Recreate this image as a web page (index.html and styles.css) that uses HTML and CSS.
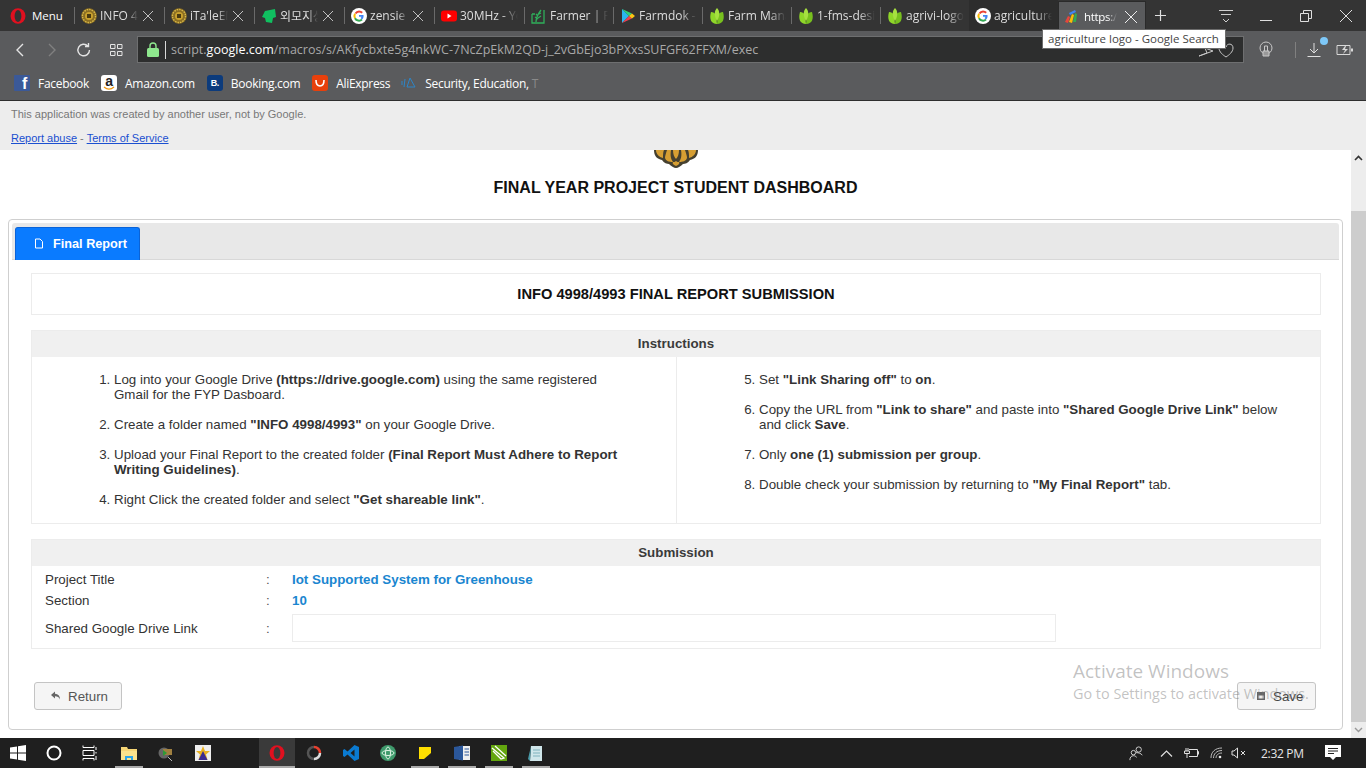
FILE: index.html
```html
<!DOCTYPE html>
<html lang="en">
<head>
<meta charset="utf-8">
<title>Final Report</title>
<link rel="stylesheet" href="styles.css">
</head>
<body>
<header class="browser">
  <div class="tabbar">
    <div class="menu">
      <svg class="ico16" viewBox="0 0 16 16"><ellipse cx="8" cy="8" rx="7.500" ry="7.700" fill="#e0101f"/><ellipse cx="8" cy="8" rx="3.400" ry="6" fill="#333"/></svg>
      <span>Menu</span>
    </div>
    <div class="tab"><svg class="ico16" viewBox="0 0 16 16"><use href="#crest"/></svg><span class="t">INFO 4</span><span class="x"></span></div>
    <div class="tab"><svg class="ico16" viewBox="0 0 16 16"><use href="#crest"/></svg><span class="t">iTa'leEM</span><span class="x"></span></div>
    <div class="tab"><svg class="ico16" viewBox="0 0 16 16"><path d="M4 3l10-2 1 8-3 1-1 5-6-1-1-4-3-1z" fill="#10c060"/></svg><span class="t">외모지상</span><span class="x"></span></div>
    <div class="tab"><svg class="ico16" viewBox="0 0 16 16"><use href="#g"/></svg><span class="t">zensie</span><span class="x"></span></div>
    <div class="tab"><svg class="ico16" viewBox="0 0 16 16"><rect y="2.500" width="16" height="11" rx="3" fill="#f00"/><path d="M6.500 5.500l4 2.500-4 2.500z" fill="#fff"/></svg><span class="t">30MHz - Yo</span></div>
    <div class="tab"><svg class="ico16" viewBox="0 0 16 16" fill="none" stroke="#2fae5a" stroke-width="1.300"><path d="M1 6h3M1 6v9h9M13 2v13h-3M5 14c0-5 2-8 5-12M5 6l2 2M4 9l3 2M10 5l-2 1M10 8l-3 2"/></svg><span class="t">Farmer | FA</span></div>
    <div class="tab"><svg class="ico16" viewBox="0 0 16 16"><path d="M2 1v14l7-7z" fill="#2ab7f0"/><path d="M2 1l7 7 3-2.500z" fill="#2fd07a"/><path d="M2 15l7-7 3 2.500z" fill="#ef4050"/><path d="M12 5.500l3 2.500-3 2.500L9 8z" fill="#fcc513"/></svg><span class="t">Farmdok -</span></div>
    <div class="tab"><svg class="ico16" viewBox="0 0 16 16"><use href="#leaf"/></svg><span class="t">Farm Mana</span></div>
    <div class="tab"><svg class="ico16" viewBox="0 0 16 16"><use href="#leaf"/></svg><span class="t">1-fms-desi</span></div>
    <div class="tab"><svg class="ico16" viewBox="0 0 16 16"><use href="#leaf"/></svg><span class="t">agrivi-logo</span></div>
    <div class="tab plain"><svg class="ico16" viewBox="0 0 16 16"><use href="#g"/></svg><span class="t">agriculture</span></div>
    <div class="tab active"><svg class="ico16" viewBox="0 0 16 16"><path d="M1 13l3-6 2 1-2 6z" fill="#e8453c"/><path d="M5 13l3-8 2 1-2 8z" fill="#fbbc05"/><path d="M9 13l2-9 2 1-1 8z" fill="#34a853"/><path d="M5 4l6-3 1 2-6 3z" fill="#4285f4"/></svg><span class="t">https:/</span><span class="x"></span></div>
    <svg class="plus" viewBox="0 0 13 13"><path d="M6.500 1v11M1 6.500h11" stroke="#e0e0e0" fill="none" stroke-width="1.200"/></svg>
    <div class="winbtns">
      <svg class="wb" viewBox="0 0 16 16" fill="none" stroke="#d0d0d0"><path d="M1 2.500h14M3 6.500h10M5 11l3 3 3-3"/></svg>
      <svg class="wb" viewBox="0 0 16 16" fill="none" stroke="#e0e0e0"><path d="M2 12.500h12"/></svg>
      <svg class="wb" viewBox="0 0 16 16" fill="none" stroke="#e0e0e0"><path d="M2.500 5.500h8v8h-8zM5.500 5.500v-3h8v8h-3"/></svg>
      <svg class="wb" viewBox="0 0 16 16" fill="none" stroke="#e0e0e0"><path d="M2 2l12 12M14 2L2 14"/></svg>
    </div>
  </div>
  <div class="addr">
    <svg class="nav" viewBox="0 0 16 16" fill="none" stroke="#e4e4e4" stroke-width="1.400"><path d="M11 2L5 8l6 6"/></svg>
    <svg class="nav" viewBox="0 0 16 16" fill="none" stroke="#808080" stroke-width="1.400"><path d="M5 2l6 6-6 6"/></svg>
    <svg class="nav" viewBox="0 0 16 16" fill="none" stroke="#e4e4e4" stroke-width="1.400"><path d="M13.500 8a5.800 5.800 0 1 1-1.700-4.100M12.500 1v3.500H9"/></svg>
    <svg class="nav" viewBox="0 0 16 16" fill="none" stroke="#e4e4e4"><path d="M2.500 2.500h4.500v4H2.500zM9.500 2.500H14v4H9.500zM2.500 9.500h4.500v4H2.500zM9.500 9.500H14v4H9.500z"/></svg>
    <div class="urlbox">
      <svg class="lock" viewBox="0 0 12 15"><path d="M3 7V4a3 3 0 0 1 6 0v3" fill="none" stroke="#8ee88e" stroke-width="1.400"/><rect y="6" width="12" height="9" rx="1.500" fill="#8ee88e"/></svg>
      <span class="url"><span class="dim">script.</span>google.com<span class="dim">/macros/s/AKfycbxte5g4nkWC-7NcZpEkM2QD-j_2vGbEjo3bPXxsSUFGF62FFXM/exec</span></span>
      <svg class="urlico" viewBox="0 0 36 16" fill="none" stroke="#c8c8c8"><path d="M1 14l14-5-8-3 2 5zM21 6c0-5 6-5 7-1 1-4 7-4 7 1 0 4-4 7-7 9-3-2-7-5-7-9z"/></svg>
    </div>
    <div class="extras">
      <svg class="ex1" viewBox="0 0 16 18" fill="none" stroke="#c8c8c8"><circle cx="8" cy="7" r="6"/><path d="M5 10h6v5H5z" fill="#999"/><path d="M6.500 10V5h3v5"/></svg>
      <span class="vsep"></span>
      <span class="dl"><svg viewBox="0 0 16 16" fill="none" stroke="#e0e0e0"><path d="M8 1v10M4 7l4 4 4-4M1.500 14.500h13"/></svg><i class="dot"></i></span>
      <svg class="bat" viewBox="0 0 18 12" fill="none" stroke="#d8d8d8"><path d="M1 1.500h13v9H1z"/><path d="M16 4.500v3" stroke-width="2"/><path d="M9 2L6 6h3l-2 4 5-5H9l1-3z" fill="#d8d8d8" stroke="none"/></svg>
    </div>
  </div>
  <div class="bookmarks">
    <div class="bm"><span class="bi fb">f</span>Facebook</div>
    <div class="bm"><span class="bi az"><span class="aza">a</span><svg class="smile" viewBox="0 0 16 5"><path d="M3 1c3 2.500 7 2.500 10 0" fill="none" stroke="#f0960e" stroke-width="1.300"/></svg></span>Amazon.com</div>
    <div class="bm"><span class="bi bk">B.</span>Booking.com</div>
    <div class="bm"><span class="bi ali"><svg viewBox="0 0 16 16"><path d="M4 5c0 8 8 8 8 0" fill="none" stroke="#fff" stroke-width="1.600"/></svg></span>AliExpress</div>
    <div class="bm last"><svg class="bi" viewBox="0 0 16 16" fill="none" stroke="#2d86c8"><path d="M1 6v4M4 4l-1 8M9 3l5 9H6z"/></svg><span>Security, Education, <span class="fade">T</span></span></div>
  </div>
</header>

<div class="gasbar">
  <p class="gasnote">This application was created by another user, not by Google.</p>
  <p class="gaslinks"><a href="#">Report abuse</a> - <a href="#">Terms of Service</a></p>
</div>

<div class="viewport">
  <main class="page">
    <div class="logoclip"><svg class="logo" viewBox="0 0 46 18"><path d="M1 0c0 6 3 9 8 10 2 3 5 4 7 4 2 2 5 4 7 4s5-2 7-4c2 0 5-1 7-4 5-1 8-4 8-10z" fill="#45402f"/><path d="M3 0c0 4 3 7 7 8 0-3 0-6 1-8zM12 8c1 3 4 4 8 4-2-3-3-6-2-12h-4c-1 3-2 6-2 8zM34 8c-1 3-4 4-8 4 2-3 3-6 2-12h4c1 3 2 6 2 8zM43 0c0 4-3 7-7 8 0-3 0-6-1-8zM23 16c-3-1-4-3-3-4 1 0 2 0 3-1 1 1 2 1 3 1 1 1 0 3-3 4zM20 0c0 4 1 7 3 9 2-2 3-5 3-9z" fill="#d69e32"/></svg></div>
    <h1 class="apptitle">FINAL YEAR PROJECT STUDENT DASHBOARD</h1>
    <section class="card">
      <nav class="tabstrip">
        <div class="ftab"><svg viewBox="0 0 10 11" fill="none" stroke="#fff"><path d="M1.500 1h4.500l2.500 2.500v6.500h-7z"/></svg><span>Final Report</span></div>
      </nav>
      <div class="content">
        <div class="panel headline">INFO 4998/4993 FINAL REPORT SUBMISSION</div>
        <div class="panel">
          <div class="phead">Instructions</div>
          <div class="cols">
            <ol class="steps">
              <li>Log into your Google Drive <b>(https://drive.google.com)</b> using the same registered Gmail for the FYP Dasboard.</li>
              <li>Create a folder named <b>"INFO 4998/4993"</b> on your Google Drive.</li>
              <li>Upload your Final Report to the created folder <b>(Final Report Must Adhere to Report Writing Guidelines)</b>.</li>
              <li>Right Click the created folder and select <b>"Get shareable link"</b>.</li>
            </ol>
            <ol class="steps right" start="5">
              <li>Set <b>"Link Sharing off"</b> to <b>on</b>.</li>
              <li>Copy the URL from <b>"Link to share"</b> and paste into <b>"Shared Google Drive Link"</b> below and click <b>Save</b>.</li>
              <li>Only <b>one (1) submission per group</b>.</li>
              <li>Double check your submission by returning to <b>"My Final Report"</b> tab.</li>
            </ol>
          </div>
        </div>
        <div class="panel">
          <div class="phead">Submission</div>
          <div class="form">
            <div class="row r1"><span class="lab">Project Title</span><span class="col">:</span><span class="val">Iot Supported System for Greenhouse</span></div>
            <div class="row r2"><span class="lab">Section</span><span class="col">:</span><span class="val">10</span></div>
            <div class="row r3"><span class="lab">Shared Google Drive Link</span><span class="col">:</span><span class="inp"></span></div>
          </div>
        </div>
        <div class="actions">
          <div class="btn ret"><svg viewBox="0 0 10 9" fill="#666"><path d="M4 0L0 3.500 4 7V4.800c2.500 0 4 .7 5 3.200 0-3.500-2-5.500-5-5.700z"/></svg>Return</div>
          <div class="btn save"><svg viewBox="0 0 10 10" fill="#666"><path d="M1 1h8v8H1z"/><path d="M2.500 4.500h5v3h-5z" fill="#eee"/></svg>Save</div>
        </div>
      </div>
    </section>
  </main>
  <aside class="scrollbar">
    <svg viewBox="0 0 9 6" fill="none" stroke="#333" stroke-width="1.600"><path d="M1 5l3.500-3.500L8 5"/></svg>
    <div class="track"><div class="thumb"></div></div>
    <svg viewBox="0 0 9 6" fill="none" stroke="#999" stroke-width="1.400"><path d="M1 1l3.500 3.500L8 1"/></svg>
  </aside>
</div>

<footer class="taskbar">
  <svg class="ti" viewBox="0 0 16 16" fill="#fff"><path d="M0 2.500l7-1v6H0zM8 1.300L16 0v7.500H8zM0 8.500h7v6l-7-1zM8 8.500h8V16l-8-1.200z"/></svg>
  <svg class="ti sys" viewBox="0 0 16 16" fill="none" stroke="#fff" stroke-width="2"><circle cx="8" cy="8" r="6.500"/></svg>
  <svg class="ti sys" viewBox="0 0 16 16" fill="none" stroke="#fff"><path d="M1 .5v2h11v-2M1 15.500v-2h11v2M1 5.500h11v5H1zM14 2v3M14 7v1.500M14 11v4"/></svg>
  <span class="ti on folder"><svg viewBox="0 0 16 16"><path d="M0 2h6l1 2h9v11H0z" fill="#f6d676"/><path d="M0 6h16v9H0z" fill="#fbe38c"/><path d="M4 11h8v4h-2v-2H6v2H4z" fill="#2ba5e8"/></svg></span>
  <span class="ti"><svg viewBox="0 0 16 16"><circle cx="6" cy="8" r="5.500" fill="#666"/><path d="M5 4h9v6H5z" fill="#a08040"/><path d="M5 5v6l4-3z" fill="#2c9a38"/><path d="M10 12l4 4" stroke="#bbb"/></svg></span>
  <span class="ti"><svg viewBox="0 0 16 16"><rect width="16" height="16" fill="#eee"/><path d="M8 1l2 5h5l-4 3.500 1.500 5.500L8 12l-4.500 3L5 9.500 1 6h5z" fill="#e8b020"/><path d="M8 6l4.500 9H3.500z" fill="#3b2a90"/></svg></span>
  <span class="ti active"><svg viewBox="0 0 16 16"><ellipse cx="8" cy="8" rx="7.500" ry="7.800" fill="#e0101f"/><ellipse cx="8" cy="8" rx="3.400" ry="6" fill="#3a3a3a"/></svg></span>
  <span class="ti"><svg viewBox="0 0 16 16" fill="none" stroke-width="2.500"><path d="M8 2a6 6 0 0 1 6 6" stroke="#e8402f"/><path d="M14 8a6 6 0 0 1-6 6" stroke="#ddd"/><path d="M8 14a6 6 0 0 1-6-6 6 6 0 0 1 6-6" stroke="#555"/></svg></span>
  <span class="ti"><svg viewBox="0 0 16 16"><path d="M11.500 0L16 2v12l-4.500 2L4.500 9.500 1.500 12 0 11V5l1.500-1 3 2.500zM11.500 4.500L7.500 8l4 3.500z" fill="#0a7ad1"/></svg></span>
  <span class="ti"><svg viewBox="0 0 16 16"><circle cx="8" cy="8" r="8" fill="#3f9a6c"/><g fill="none" stroke="#dff3e4"><ellipse cx="8" cy="8" rx="6" ry="2.500"/><ellipse cx="8" cy="8" rx="2.500" ry="6"/></g></svg></span>
  <span class="ti on"><svg viewBox="0 0 16 16"><path d="M2 2h12v12H2z" fill="#ffdf00"/><path d="M7 14l7-6v6z" fill="#222"/></svg></span>
  <span class="ti on"><svg viewBox="0 0 16 16"><path d="M5 1h11v14H5z" fill="#eee"/><path d="M0 2l9-1.500v15L0 14z" fill="#2b579a"/><path d="M10.500 4H15M10.500 7H15M10.500 10H15" stroke="#2b579a"/></svg></span>
  <span class="ti on"><svg viewBox="0 0 16 16"><rect width="16" height="16" fill="#63a60f"/><path d="M1 3l12 10-3 1L2 6M4 1l11 10" fill="none" stroke="#fff" stroke-width="1.300"/></svg></span>
  <span class="ti on"><svg viewBox="0 0 16 16"><path d="M3 1h11v15H2z" fill="#cfe6ea"/><path d="M3 1L0 14l2 2z" fill="#4a9aa8"/><path d="M5 5h7M5 8h7M5 11h7" stroke="#7fb2bd"/></svg></span>
  <div class="tray">
    <svg class="ppl" viewBox="0 0 17 17" fill="none" stroke="#e0e0e0"><circle cx="11" cy="4" r="3"/><circle cx="5" cy="7.500" r="2.500"/><path d="M1 16c0-3 1.500-5 4-5s3 1 3.500 2M8 7.500c3 0 6 1 7 3"/></svg>
    <svg class="chev" viewBox="0 0 13 7" fill="none" stroke="#e0e0e0" stroke-width="1.200"><path d="M1 6.500l5.500-5.500L12 6.500"/></svg>
    <svg class="plug" viewBox="0 0 16 10" fill="none" stroke="#e0e0e0"><path d="M6 1.500h8.500v7H6M14.500 3.500h1v3M3 0v3M5 0v3M1.500 3h5v2.500h-5zM4 5.500V10"/></svg>
    <svg class="wifi" viewBox="0 0 13 12" fill="none" stroke="#bbb"><path d="M1 11C1 5 5 1 12 1M3.500 11c0-4 3-7.500 8.500-7.500M6 11c0-2.500 2-5 6-5"/><circle cx="10" cy="10" r="1.300" fill="#eee" stroke="none"/></svg>
    <svg class="vol" viewBox="0 0 15 12" fill="none" stroke="#e0e0e0"><path d="M1 4v4h2l3.500 3V1L3 4zM10 4l4 4M14 4l-4 4"/></svg>
    <span class="clock">2:32 PM</span>
    <svg class="note" viewBox="0 0 16 16" fill="#fff"><path d="M0 0h16v12h-5l-3 3-3-3H0z"/><path d="M3 3.500h10M3 6h10M3 8.500h6" stroke="#222"/></svg>
  </div>
</footer>

<div class="tooltip">agriculture logo - Google Search</div>
<div class="watermark"><div class="wm1">Activate Windows</div><div class="wm2">Go to Settings to activate Windows.</div></div>

<svg class="defs" width="0" height="0"><defs>
  <g id="crest"><circle cx="8" cy="8" r="7.800" fill="#8a6d22"/><circle cx="8" cy="8" r="6.500" fill="none" stroke="#d8b84a" stroke-width="1.400" stroke-dasharray="1.500 1"/><circle cx="8" cy="8" r="4" fill="#c9a12e"/><rect x="6" y="6" width="4" height="4" fill="#4a3a10"/></g>
  <g id="g"><circle cx="8" cy="8" r="8" fill="#fff"/><path d="M8 3.500a4.500 4.500 0 0 1 3.200 1.300" fill="none" stroke="#ea4335" stroke-width="2"/><path d="M4.500 5.500A4.500 4.500 0 0 1 8 3.500" fill="none" stroke="#ea4335" stroke-width="2"/><path d="M4 10.200a4.500 4.500 0 0 1 0-4.400" fill="none" stroke="#fbbc05" stroke-width="2"/><path d="M11 11.500A4.500 4.500 0 0 1 4 10.200" fill="none" stroke="#34a853" stroke-width="2"/><path d="M8 7h4.500c.3 2-.3 3.500-1.500 4.500L9.500 10c.5-.3.800-.8 1-1.300H8z" fill="#4285f4"/></g>
  <g id="leaf"><path d="M8 16C2 16 0 11 2 4c2 0 4 1 5 3z" fill="#8fd629"/><path d="M8 16c6 0 8-5 6-12-2 0-4 1-5 3z" fill="#78c01e"/><path d="M8 0C5 3 5 8 8 13c3-5 3-10 0-13z" fill="#a6e040"/></g>
</defs></svg>
</body>
</html>
```
FILE: styles.css
```css
* { box-sizing: border-box; }
html, body { margin: 0; padding: 0; }
body {
  width: 1366px;
  height: 768px;
  overflow: hidden;
  position: relative;
  display: flex;
  flex-direction: column;
  font-family: "Liberation Sans", Arial, sans-serif;
  background: #fff;
  color: #333;
}
.defs { position: absolute; }
.browser { background: #5a5b5d; height: 100px; flex: none; }

.tabbar { height: 31px; background: #343434; display: flex; align-items: stretch; font-family: "Open Sans", sans-serif; font-size: 12px; color: #dcdcdc; }
.ico16 { width: 16px; height: 16px; flex: none; }
.menu { width: 74px; flex: none; padding-left: 10px; display: flex; align-items: center; gap: 6px; color: #fff; font-size: 11.500px; }
.tab { width: 89px; flex: none; display: flex; align-items: center; padding-left: 7px; position: relative; }
.tab:nth-child(-n+6) { width: 90px; }
.tab::before { content: ""; position: absolute; left: 0; top: 7px; bottom: 7px; width: 1px; background: #6a6a6a; }
.tab .t { margin-left: 3px; width: 38px; flex: none; overflow: hidden; white-space: nowrap; font-size: 12px; -webkit-mask-image: linear-gradient(90deg, #000 72%, transparent); mask-image: linear-gradient(90deg, #000 72%, transparent); font-family: "Open Sans", "Noto Sans CJK KR", sans-serif; }
.tab .x { width: 10px; height: 10px; margin-left: 5px; flex: none; background: linear-gradient(45deg, transparent 46%, #c0c0c0 46%, #c0c0c0 54%, transparent 54%), linear-gradient(-45deg, transparent 46%, #c0c0c0 46%, #c0c0c0 54%, transparent 54%); }
.tab:nth-child(n+6) .t { width: 58px; }
.tab.plain::before { display: none; }
.tab.plain { background: #2d2d2d; width: 89px; padding-left: 6px; }
.tab.active { width: 88px; background: #5a5b5d; border: 1px solid #2a2a2a; border-bottom: 0; margin-top: 1px; color: #fff; padding-left: 5px; }
.tab.active::before { display: none; }
.tab.active .t { width: 33px; margin-left: 4px; font-size: 11.500px; letter-spacing: -.3px; }
.tab.active .x { margin-left: 8px; width: 12px; height: 12px; background: linear-gradient(45deg, transparent 46%, #eee 46%, #eee 54%, transparent 54%), linear-gradient(-45deg, transparent 46%, #eee 46%, #eee 54%, transparent 54%); }
.plus { width: 13px; height: 13px; align-self: center; margin-left: 7.500px; }
.winbtns { margin-left: auto; display: flex; align-items: center; gap: 24px; padding-right: 12px; }
.wb { width: 16px; height: 16px; }

.addr { height: 37px; display: flex; align-items: center; padding-left: 12px; }
.nav { width: 16px; height: 16px; flex: none; margin-right: 16px; }
.urlbox { margin-left: -3px; width: 1107px; height: 27px; background: #2d2e2e; border: 1px solid #6e6f70; display: flex; align-items: center; padding-left: 9px; position: relative; }
.lock { width: 12px; height: 15px; flex: none; }
.url { margin-left: 6px; padding-left: 5px; border-left: 1px solid #d8d8d8; line-height: 18px; font-family: "Open Sans", sans-serif; font-size: 12.500px; color: #fff; white-space: nowrap; }
.dim { color: #a8a8a8; }
.urlico { width: 36px; height: 16px; margin-left: auto; margin-right: 9px; }
.extras { display: flex; align-items: center; margin-left: 14px; }
.ex1 { width: 16px; height: 18px; }
.vsep { width: 1px; height: 16px; background: #808080; margin: 0 10px 0 21px; }
.dl { position: relative; width: 16px; height: 16px; display: block; }
.dl svg { display: block; width: 16px; height: 16px; }
.dot { position: absolute; width: 8px; height: 8px; border-radius: 50%; background: #7ec8f8; right: -6px; top: -5px; }
.bat { width: 18px; height: 12px; margin-left: 14px; }

.bookmarks { height: 32px; display: flex; align-items: center; padding-left: 14px; padding-bottom: 2px; color: #fff; font-family: "Open Sans", sans-serif; font-size: 12px; letter-spacing: -.3px; }
.bm { display: flex; align-items: center; gap: 8px; margin-right: 12px; white-space: nowrap; }
.bi { width: 16px; height: 16px; flex: none; display: flex; align-items: center; justify-content: center; font-family: "Liberation Sans", sans-serif; font-weight: 700; border-radius: 1px; }
.bi svg { width: 16px; height: 16px; }
.fb { background: #3b5998; font-size: 16px; align-items: flex-end; justify-content: flex-end; padding-right: 3px; line-height: 14px; }
.az { background: #fff; color: #222; border-radius: 3px; font-size: 14px; position: relative; align-items: flex-start; line-height: 12px; }
.aza { display: block; }
.bi svg.smile { position: absolute; left: 0; bottom: 0; width: 16px; height: 5px; }
.bk { background: #0c3b7c; font-size: 9px; border-radius: 3px; }
.ali { background: #e8400c; border-radius: 3px; }
.fade { color: #8a8a8a; }
.bm.last { margin-left: -1px; }

.gasbar { height: 50px; flex: none; background: #ededed; border-top: 1px solid #2e2e2e; font-size: 11px; padding: 7px 0 0 11px; color: #787878; }
.gasnote { margin: 0; line-height: 12px; }
.gaslinks { margin: 12px 0 0; line-height: 12px; }
.gaslinks a { color: #1a4fd0; }

.viewport { height: 588px; flex: none; display: flex; background: #fff; }
.page { width: 1351px; flex: none; padding: 0 8px; }
.logoclip { height: 18px; overflow: hidden; display: flex; justify-content: center; }
.logo { width: 46px; height: 18px; }
.apptitle { margin: 11px 0 0; font-size: 16px; line-height: 18px; font-weight: 700; color: #111; text-align: center; height: 22px; }
.card { margin-top: 18px; height: 511px; border: 1px solid #cfcfcf; border-radius: 4px; padding: 3px 0 0 3px; background: #fff; }
.tabstrip { height: 37px; width: 1327px; background: #e8e8e8; border-bottom: 1px solid #d8d8d8; border-radius: 3px 3px 0 0; padding-left: 3px; padding-top: 4px; display: flex; }
.ftab { width: 125px; height: 33px; background: #0a7bff; border: 1px solid #0a63d8; border-bottom: 0; border-radius: 3px 3px 0 0; display: flex; align-items: center; color: #fff; font-size: 12.700px; font-weight: 700; padding-left: 18px; padding-bottom: 1px; gap: 9px; }
.ftab svg { width: 10px; height: 11px; }
.content { padding: 13px 18px 0 19px; }
.panel { border: 1px solid #ececec; background: #fff; margin-bottom: 15px; width: 1290px; }
.headline { height: 42px; display: flex; align-items: center; justify-content: center; font-size: 14.670px; font-weight: 700; color: #111; }
.phead { height: 26px; background: #f0f0f0; text-align: center; font-size: 13.330px; font-weight: 700; color: #3a3a3a; line-height: 25px; }
.cols { display: flex; height: 166px; }
.steps { margin: 0; flex: none; width: 644px; padding: 15px 51px 0 82px; font-size: 13.330px; line-height: 15px; color: #333; list-style: decimal; }
.steps li { margin-bottom: 15px; }
.steps b { font-weight: 700; color: #333; }
.steps.right { width: 644px; border-left: 1px solid #ececec; padding-left: 82px; padding-right: 30px; }
.form { padding: 3px 13px 0; height: 82px; font-size: 13.330px; }
.row { display: flex; align-items: center; }
.r1, .r2 { height: 21px; }
.r3 { height: 28px; margin-top: 3px; }
.lab { width: 221px; color: #333; }
.col { width: 26px; color: #555; }
.val { color: #1a86d0; font-weight: 700; }
.inp { width: 764px; height: 28px; border: 1px solid #ececec; background: #fff; }
.actions { display: flex; justify-content: space-between; margin-top: 33px; padding: 0 5px 0 3px; width: 1290px; }
.btn { height: 28px; background: #f5f5f5; border: 1px solid #c4c4c4; border-radius: 3px; display: flex; align-items: center; font-size: 13.330px; color: #555; gap: 7px; }
.btn svg { width: 10px; height: 10px; }
.ret { width: 88px; padding-left: 16px; }
.save { width: 79px; padding-left: 18px; color: #444; }

.scrollbar { width: 15px; flex: none; background: #ededed; display: flex; flex-direction: column; align-items: center; }
.scrollbar svg { width: 9px; height: 6px; flex: none; margin: 5px 0; }
.track { flex: 1; width: 100%; display: flex; flex-direction: column; padding-top: 45px; }
.thumb { flex: 1; background: #cdcdcd; }

.taskbar { height: 30px; flex: none; background: #1f1f1f; display: flex; align-items: center; }
.ti { width: 16px; height: 16px; flex: none; margin-left: 21px; display: block; }
.ti svg { display: block; width: 16px; height: 16px; }
.taskbar > .ti:first-child { margin-left: 10px; }
.ti.sys { margin-left: 20px; }
.ti.folder { margin-left: 23px; }
.ti.on { position: relative; }
.ti.on::after { content: ""; position: absolute; left: -6px; right: -6px; bottom: -7px; height: 2px; background: #aaa; }
.ti.active { position: relative; margin-left: 58px; }
.ti.active::before { content: ""; position: absolute; left: -10px; right: -10px; top: -7px; bottom: -7px; background: #3a3a3a; border-bottom: 2px solid #aaa; }
.ti.active svg { position: relative; }
.tray { margin-left: auto; display: flex; align-items: center; color: #e6e6e6; font-family: "Open Sans", sans-serif; font-size: 12px; padding-right: 25px; }
.ppl { width: 15px; height: 15px; }
.chev { width: 13px; height: 7px; margin-left: 16px; }
.plug { width: 16px; height: 10px; margin-left: 10px; }
.wifi { width: 13px; height: 12px; margin-left: 11px; }
.vol { width: 15px; height: 12px; margin-left: 8px; }
.clock { margin-left: 15px; letter-spacing: -.3px; width: 45px; white-space: nowrap; }
.note { width: 16px; height: 16px; margin-left: 19px; }

.tooltip { position: absolute; left: 1042px; top: 29px; height: 20px; width: 184px; background: #fff; border: 1px solid #6c6c6c; font-family: "Open Sans", sans-serif; font-size: 11.500px; line-height: 18px; padding-left: 5px; color: #444; white-space: nowrap; }
.watermark { position: absolute; left: 1073px; top: 659px; color: rgba(120,120,120,.45); font-family: "Open Sans", sans-serif; pointer-events: none; white-space: nowrap; }
.wm1 { font-size: 19px; line-height: 24px; }
.wm2 { font-size: 14.400px; line-height: 21px; }
```
